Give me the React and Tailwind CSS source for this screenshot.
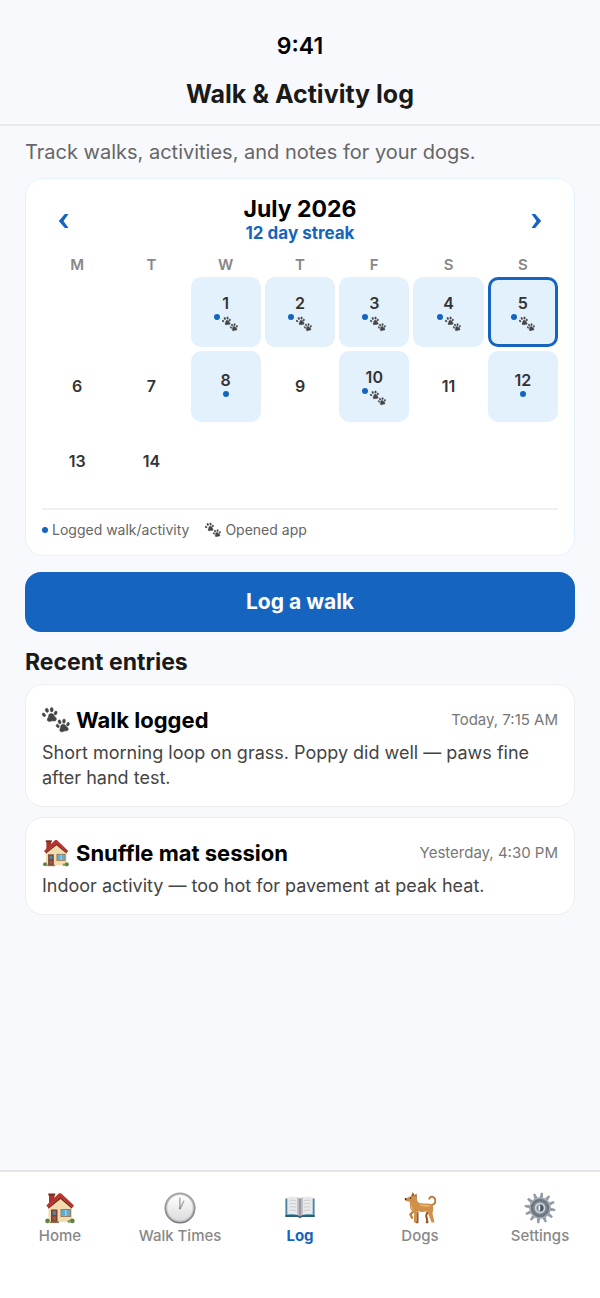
import React, { useState } from 'react';
import clsx from 'clsx';

const PawsIcon = ({ className }) => (
  <svg viewBox="0 0 28 26" className={className} aria-hidden="true">
    <g fill="#454545" stroke="#454545" strokeWidth=".5" strokeLinejoin="round">
      <path d="M8.400 6.600c1.900-.5 3.200.6 3.800 2.100.5 1.200 2.300 1.800 2.200 3.500-.1 1.600-1.700 2-3.200 1.700-1.300-.2-2 .4-3.300.6-1.700.2-3.100-.9-2.600-2.500.3-1 1.100-1.400 1.200-2.600.1-1.300.6-2.400 1.900-2.800z" />
      <ellipse cx="1.900" cy="7.800" rx="1.400" ry="2" transform="rotate(-35 1.900 7.800)" />
      <ellipse cx="4.900" cy="3.300" rx="1.500" ry="2.200" transform="rotate(-20 4.900 3.300)" />
      <ellipse cx="9.700" cy="2.700" rx="1.500" ry="2.200" />
      <ellipse cx="13.600" cy="6" rx="1.400" ry="2" transform="rotate(20 13.600 6)" />
      <path d="M20 17.400c1.800-.7 3.100.2 3.900 1.600.7 1.100 2.400 1.500 2.400 3 0 1.400-1.200 2-2.600 1.800-1.300-.1-2 .7-3.300 1-1.600.3-2.800-.6-2.600-2.100.1-1 .7-1.500.7-2.500.1-1.200.4-2.300 1.500-2.800z" />
      <ellipse cx="15.700" cy="19" rx="1.300" ry="1.900" transform="rotate(-35 15.700 19)" />
      <ellipse cx="17.600" cy="14.900" rx="1.400" ry="2.100" transform="rotate(-20 17.600 14.900)" />
      <ellipse cx="22" cy="14.100" rx="1.400" ry="2.100" transform="rotate(5 22 14.100)" />
      <ellipse cx="26" cy="17.200" rx="1.300" ry="1.900" transform="rotate(25 26 17.200)" />
    </g>
  </svg>
);

const HouseIcon = ({ className }) => (
  <svg viewBox="0 0 32 32" className={className} aria-hidden="true">
    <path d="M5 2.500h5.500V10L5 14z" fill="#a3362c" />
    <path d="M4.300 1.500h6.900v2H4.300z" fill="#7d2b25" />
    <path d="M4.500 14.500 16.500 4 28 14.500v15.500H4.500z" fill="#f2dcae" />
    <path d="M16.500 4 28 14.500V17L16.500 7 4.500 17v-3z" fill="#d8b98a" />
    <path d="M17 1.200 30 13.600l-1.500 1.900-12-10.400L4 15.600l-1.700-2L15 1.200z" fill="#b9342f" />
    <path d="M4 15.600 16.500 5.100l12 10.400-.7.900L16.500 7 4.600 16.500z" fill="#7c221e" />
    <path d="M7 17.500h6.500v12.700H7z" fill="#7a4030" />
    <path d="M8.500 19h3.500v4H8.500z" fill="#56839c" />
    <path d="M8.500 24.500h3.500v4H8.500z" fill="#9c5a40" />
    <path d="M16.500 17h10.500v8H16.500z" fill="#9a7b5d" />
    <path d="M17.500 18h8.500v6H17.500z" fill="#62acd2" />
    <path d="M21.300 18h1v6h-1z" fill="#c8dce4" />
    <path d="M6 29.500h9v1.600H6z" fill="#8c6f58" />
    <circle cx="3.500" cy="28.900" r="2.300" fill="#5f8440" />
    <circle cx="28.300" cy="28.900" r="2.400" fill="#5f8440" />
    <circle cx="25" cy="29.500" r="1.400" fill="#7c9f55" />
  </svg>
);

const ClockIcon = ({ className }) => (
  <svg viewBox="0 0 32 32" className={className} aria-hidden="true">
    <defs>
      <linearGradient id="clockRim" x1="0" y1="0" x2="0" y2="1">
        <stop offset="0" stopColor="#a5a5a8" />
        <stop offset="1" stopColor="#77777b" />
      </linearGradient>
      <linearGradient id="clockFace" x1="0" y1="0" x2="0" y2="1">
        <stop offset="0" stopColor="#fff" />
        <stop offset="1" stopColor="#dcdcde" />
      </linearGradient>
    </defs>
    <circle cx="16" cy="16" r="15.500" fill="url(#clockRim)" />
    <circle cx="16" cy="16" r="14" fill="#c0c0c3" />
    <circle cx="16" cy="15.700" r="12.800" fill="url(#clockFace)" />
    <path d="M15.200 5.500h1.300l.2 11h-1.500zM19.500 8.500l1 .6-3.700 8-1.300-.8z" fill="#a2a2a6" />
    <circle cx="16" cy="16.300" r="1.100" fill="#8a8a8e" />
  </svg>
);

const BookIcon = ({ className }) => (
  <svg viewBox="-1 0 34 34" className={className} aria-hidden="true">
    <path d="M.5 7h31v19.500H18l-2 1.500-2-1.500H.5z" fill="#4489a3" />
    <path d="M.5 24.500h31v2H18l-2 1.500-2-1.500H.5z" fill="#2c5d73" />
    <path d="M2.500 5.500c5-1.200 10-.8 13.500 1.200 3.500-2 8.500-2.400 13.500-1.200V24c-5-.8-10-.4-13.500 1.500C12.500 23.600 7.500 23.200 2.500 24z" fill="#e9e9eb" />
    <path d="M13 5.600 16 7v18.500l-3-1.200zM19 5.600 16 7v18.500l3-1.200z" fill="#bcbcc0" />
    <path d="M15.500 7h1v20h-1z" fill="#74747a" />
    <path d="M5 9c3-.5 5-.3 7 .3M5 12.500c3-.5 5-.3 7 .3M5 16c3-.5 5-.3 7 .3M5 19.500c3-.5 5-.3 7 .3M20 9.300c2-.6 4-.8 7-.3M20 12.800c2-.6 4-.8 7-.3M20 16.300c2-.6 4-.8 7-.3M20 19.800c2-.6 4-.8 7-.3" fill="none" stroke="#bebec2" strokeWidth=".7" />
  </svg>
);

const DogIcon = ({ className }) => (
  <svg viewBox="0 0 32 32" className={className} aria-hidden="true">
    <path d="M26.500 13c4 .3 5.500-3 4.600-5.800C30.200 4.400 26.400 3.900 25.300 6.600" fill="none" stroke="#b87a3c" strokeWidth="2" strokeLinecap="round" />
    <path d="M13.500 20v10.300h-1.800M23.500 19.500l-1.300 4.300 1.300 6.500h-1.700" fill="none" stroke="#8f5724" strokeWidth="2" strokeLinejoin="round" />
    <path d="M9.500 19.500 6.300 22.300l1.800 3.500" fill="none" stroke="#c07f3b" strokeWidth="2.300" strokeLinecap="round" strokeLinejoin="round" />
    <path d="M6.700 4.200 8.700.3l1.800 3 1.700-1.900.7 4.600c0 2.400.7 4 2.300 4.900 3.400.7 7.500.2 10.800.9 2.200.5 3.300 2.300 3.300 4.400 0 2.400-1.200 4.300-.5 6.800l1.700 7.500h-2.900l-3.200-8.300-1.300-3.200c-3.100 1.200-6.300 1.100-8.800.3l-1.600 3.600-.2 7.600H9.900l.3-9.300c-3.200-2-4.800-5.600-4.300-9.500l-.2-2-3.900-.8c-.9-.4-1.200-1.600-.7-2.400z" fill="#cf9149" />
    <path d="M14.500 12.300c4.500.8 9-.1 12.500 1.500-4 2-8.500 1.500-12.500-1.500z" fill="#e6b06a" />
    <path d="M7.300 11.500c.2 3.400 1.200 6 3.400 8-3.200-1.500-4.500-4.500-3.400-8z" fill="#e8bd82" />
    <path d="m8.700.3 1.800 3-2.300 1.500zM12.200 1.400l.7 4.600-1.600-2.200z" fill="#8d5426" />
    <circle cx="6.600" cy="6.300" r=".7" fill="#3c2516" />
    <circle cx="1.600" cy="7" r=".9" fill="#3c2516" />
  </svg>
);

const GEAR_TEETH = [0, 30, 60, 90, 120, 150, 180, 210, 240, 270, 300, 330];

const GearIcon = ({ className }) => (
  <svg viewBox="0 0 32 32" className={className} aria-hidden="true">
    {GEAR_TEETH.map((angle) => (
      <path key={angle} d="M14.800.6h2.100l.7 5.900h-3.500z" fill="#929ba4" transform={`rotate(${angle + 8} 16 16)`} />
    ))}
    <circle cx="16" cy="16" r="10.800" fill="#a3acb5" />
    <circle cx="16" cy="16" r="9.300" fill="#6c7681" />
    <circle cx="16" cy="16" r="7" fill="#7d8893" />
    <circle cx="16" cy="16" r="5.400" fill="#cdd5dc" />
    <circle cx="16" cy="16" r="3.500" fill="#7c8791" />
    <path d="M16 12.500a3.500 3.500 0 0 1 0 7z" fill="#4c565f" />
    <path d="M14.500 13.500h1.700v5h-1.700z" fill="#f0f3f5" />
  </svg>
);

const Dot = () => <span className="size-1.5 shrink-0 rounded-full bg-[#1565c0]" />;

const WEEKDAYS = ['M', 'T', 'W', 'T', 'F', 'S', 'S'];

// July 2026 starts on a Wednesday
const LEADING_BLANKS = 2;

const DAYS = [
  { day: 1, logged: true, opened: true },
  { day: 2, logged: true, opened: true },
  { day: 3, logged: true, opened: true },
  { day: 4, logged: true, opened: true },
  { day: 5, logged: true, opened: true },
  { day: 6 },
  { day: 7 },
  { day: 8, logged: true },
  { day: 9 },
  { day: 10, logged: true, opened: true },
  { day: 11 },
  { day: 12, logged: true },
  { day: 13 },
  { day: 14 },
];

const ENTRIES = [
  {
    id: 1,
    Icon: PawsIcon,
    title: 'Walk logged',
    time: 'Today, 7:15 AM',
    note: 'Short morning loop on grass. Poppy did well — paws fine after hand test.',
  },
  {
    id: 2,
    Icon: HouseIcon,
    title: 'Snuffle mat session',
    time: 'Yesterday, 4:30 PM',
    note: 'Indoor activity — too hot for pavement at peak heat.',
  },
];

const TABS = [
  { label: 'Home', Icon: HouseIcon },
  { label: 'Walk Times', Icon: ClockIcon },
  { label: 'Log', Icon: BookIcon },
  { label: 'Dogs', Icon: DogIcon },
  { label: 'Settings', Icon: GearIcon },
];

const DayCell = ({ item, selected, onSelect }) => (
  <button
    type="button"
    onClick={() => onSelect(item.day)}
    aria-pressed={selected}
    className={clsx(
      'flex aspect-square flex-col items-center justify-center rounded-[10px] border-3 text-[#333]',
      item.logged && 'bg-[#e3f1fd]',
      selected ? 'border-[#1565c0]' : 'border-transparent'
    )}
  >
    <span className="text-base leading-5 font-semibold">{item.day}</span>
    {item.logged && (
      <span className="flex min-h-3 items-start gap-0.5 pt-px">
        <Dot />
        {item.opened && <PawsIcon className="mt-0.5 h-4 w-4" />}
      </span>
    )}
  </button>
);

const Calendar = () => {
  const [selectedDay, setSelectedDay] = useState(5);

  return (
    <section className="rounded-[18px] border border-[#e3f2fd] bg-white px-4 pt-4 pb-[13px]">
      <div className="flex items-center justify-between px-4">
        <button type="button" aria-label="Previous month" className="py-2 text-[#1565c0]">
          <svg viewBox="0 0 12 16" className="h-4 w-3" aria-hidden="true">
            <path d="M10.500 1H6.800L.8 8l6 7h3.700L5.500 8z" fill="currentColor" />
          </svg>
        </button>
        <div className="text-center">
          <h2 className="text-[23px] leading-7 font-bold text-black">July 2026</h2>
          <p className="mb-1 text-[17px] leading-5 font-bold text-[#1565c0]">12 day streak</p>
        </div>
        <button type="button" aria-label="Next month" className="py-2 text-[#1565c0]">
          <svg viewBox="0 0 12 16" className="h-4 w-3" aria-hidden="true">
            <path d="M1.500 1h3.700l6 7-6 7H1.500l5-7z" fill="currentColor" />
          </svg>
        </button>
      </div>

      <div className="mt-2 grid grid-cols-7 gap-1">
        {WEEKDAYS.map((name, index) => (
          <span key={index} className="text-center text-[15px] leading-5 font-semibold text-[#888]">
            {name}
          </span>
        ))}
      </div>
      <div className="mt-0.5 grid grid-cols-7 gap-1">
        {Array.from({ length: LEADING_BLANKS }, (_, index) => (
          <span key={index} />
        ))}
        {DAYS.map((item) => (
          <DayCell
            key={item.day}
            item={item}
            selected={item.day === selectedDay}
            onSelect={setSelectedDay}
          />
        ))}
      </div>

      <div className="mt-3 flex gap-4 border-t-2 border-[#f0f0f0] pt-2 text-sm leading-6 text-[#666]">
        <span className="flex items-center gap-1">
          <Dot />
          Logged walk/activity
        </span>
        <span className="flex items-center gap-1">
          <PawsIcon className="h-4 w-4" />
          Opened app
        </span>
      </div>
    </section>
  );
};

const EntryCard = ({ entry }) => {
  const { Icon, title, time, note } = entry;

  return (
    <li className="rounded-[18px] border border-[#eee] bg-white px-4 pt-5 pb-4">
      <div className="flex items-center justify-between">
        <h3 className="flex items-center gap-1.5 text-[22px] leading-[30px] font-bold text-black">
          <Icon className="h-7 w-7" />
          {title}
        </h3>
        <span className="text-[15px] leading-6 text-[#777]">{time}</span>
      </div>
      <p className="mt-[5px] text-lg leading-[25px] text-[#444]">{note}</p>
    </li>
  );
};

const App = () => {
  const [activeTab, setActiveTab] = useState('Log');

  return (
    <div className="flex min-h-screen flex-col bg-[#f8f9fd] font-['Inter',sans-serif]">
      <header className="border-b-2 border-[#e8e9ed] pt-8 pb-3 text-center">
        <div className="text-[23px] leading-7 font-semibold text-black">9:41</div>
        <h1 className="mt-4 text-[25px] leading-9 font-bold text-[#1a1a1a]">Walk & Activity log</h1>
      </header>

      <main className="flex-1 px-[25px] pt-3">
        <p className="mb-3 text-[20px] leading-7 text-[#666]">
          Track walks, activities, and notes for your dogs.
        </p>
        <Calendar />
        <button
          type="button"
          className="mt-4 w-full rounded-2xl bg-[#1565c0] py-4 text-[21px] leading-7 font-bold text-white"
        >
          Log a walk
        </button>
        <h2 className="mt-4 text-[23px] leading-7 font-bold text-[#1a1a1a]">Recent entries</h2>
        <ul className="mt-2 flex flex-col gap-2.5">
          {ENTRIES.map((entry) => (
            <EntryCard key={entry.id} entry={entry} />
          ))}
        </ul>
      </main>

      <nav className="grid grid-cols-5 border-t-2 border-[#e5e5e7] bg-white pt-5 pb-[50px]">
        {TABS.map(({ label, Icon }) => (
          <button
            key={label}
            type="button"
            onClick={() => setActiveTab(label)}
            className={clsx(
              'flex flex-col items-center text-[15px] leading-6',
              label === activeTab ? 'font-bold text-[#1565c0]' : 'font-medium text-[#888]'
            )}
          >
            <Icon className="h-8 w-8" />
            {label}
          </button>
        ))}
      </nav>
    </div>
  );
};

export default App;
